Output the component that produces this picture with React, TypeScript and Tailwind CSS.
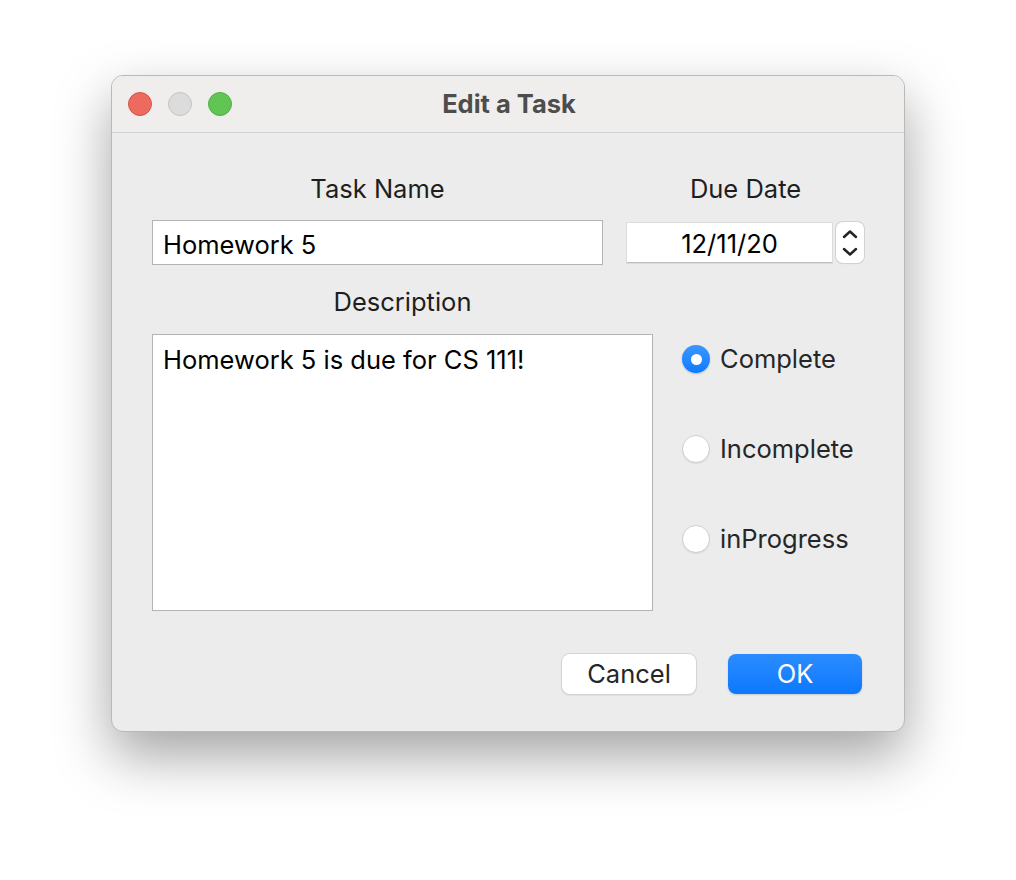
import React from "react";

function Radio({ checked, label }: { checked?: boolean; label: string }) {
  return (
    <div className="flex items-center h-[28px]">
      {checked ? (
        <div className="w-[28px] h-[28px] rounded-full bg-gradient-to-b from-[#3a96ff] to-[#0a7bff] flex items-center justify-center shadow-[0_1px_2px_rgba(0,0,0,0.2)]">
          <div className="w-[11px] h-[11px] rounded-full bg-white" />
        </div>
      ) : (
        <div className="w-[28px] h-[28px] rounded-full bg-white border border-[#cfcfcf] shadow-[0_1px_1px_rgba(0,0,0,0.08)]" />
      )}
      <span className="ml-[10px] text-[25.5px] text-[#262626] leading-none">{label}</span>
    </div>
  );
}

export default function App() {
  return (
    <div
      className="w-[1016px] h-[880px] bg-white pl-[111px] pt-[75px]"
      style={{ fontFamily: "Inter, 'Noto Sans', sans-serif" }}
    >
      <div className="w-[794px] h-[657px] rounded-[12px] bg-[#ececec] border border-[#b9b9b9] shadow-[0_24px_55px_rgba(0,0,0,0.36)] overflow-hidden flex flex-col">
        {/* title bar */}
        <div className="h-[57px] bg-[#efeeed] border-b border-[#d2d2d2] flex items-center relative shrink-0">
          <div className="flex items-center gap-[16px] pl-[16px]">
            <div className="w-[24px] h-[24px] rounded-full bg-[#ec6a5e] border border-[#d2544a]" />
            <div className="w-[24px] h-[24px] rounded-full bg-[#dcdcdc] border border-[#c4c4c4]" />
            <div className="w-[24px] h-[24px] rounded-full bg-[#61c554] border border-[#4fae43]" />
          </div>
          <div className="absolute inset-0 flex items-center justify-center pointer-events-none">
            <span className="text-[25.5px] font-bold text-[#4d4d4d] pl-[2px]">Edit a Task</span>
          </div>
        </div>

        {/* body */}
        <div className="pl-[40px] pt-[41px] flex flex-col">
          <div className="flex">
            <div className="w-[451px] flex flex-col">
              <div className="h-[30px] flex items-center justify-center text-[25.5px] text-[#1e1e1e]">Task Name</div>
              <div className="mt-[16px] h-[45px] bg-white border border-[#b3b3b3] flex items-center pl-[10px] pt-[5px] text-[25.5px] text-black">
                Homework 5
              </div>
            </div>
            <div className="ml-[24px] w-[237px] flex flex-col">
              <div className="h-[30px] flex items-center justify-center text-[25.5px] text-[#1e1e1e]">Due Date</div>
              <div className="mt-[18px] flex items-start">
                <div className="mt-[1px] w-[205px] h-[40px] bg-white border-b border-[#bdbdbd] shadow-[0_0_0_1px_#dcdcdc] flex items-center justify-center pt-[3px] text-[25.5px] text-black">
                  12/11/20
                </div>
                <div className="ml-[4px] w-[28px] h-[41px] bg-white rounded-[7px] shadow-[0_0_0_1px_#d2d2d2,0_1px_1px_rgba(0,0,0,0.15)] flex flex-col items-center justify-center">
                  <svg width="16" height="10" viewBox="0 0 16 10" className="mb-[8px]">
                    <path d="M2 8 L8 2.5 L14 8" fill="none" stroke="#222" strokeWidth="2.4" strokeLinecap="round" strokeLinejoin="round" />
                  </svg>
                  <svg width="16" height="10" viewBox="0 0 16 10">
                    <path d="M2 2 L8 7.5 L14 2" fill="none" stroke="#222" strokeWidth="2.4" strokeLinecap="round" strokeLinejoin="round" />
                  </svg>
                </div>
              </div>
            </div>
          </div>

          <div className="flex mt-[22px]">
            <div className="w-[501px] flex flex-col">
              <div className="h-[30px] flex items-center justify-center text-[25.5px] text-[#1e1e1e]">Description</div>
              <div className="mt-[17px] h-[277px] bg-white border border-[#b3b3b3] pl-[10px] pt-[10px] text-[25.5px] text-black leading-[30px]">
                Homework 5 is due for CS 111!
              </div>
            </div>
            <div className="ml-[29px] pt-[58px] flex flex-col gap-[62px]">
              <Radio checked label="Complete" />
              <Radio label="Incomplete" />
              <Radio label="inProgress" />
            </div>
          </div>

          <div className="flex justify-end pr-[42px] mt-[43px] gap-[32px]">
            <div className="w-[134px] h-[40px] rounded-[8px] bg-white shadow-[0_0_0_1px_#d4d4d4,0_1px_2px_rgba(0,0,0,0.2)] flex items-center justify-center text-[25.5px] text-[#262626]">
              Cancel
            </div>
            <div className="w-[134px] h-[40px] rounded-[8px] bg-gradient-to-b from-[#2a8cff] to-[#0a78fe] shadow-[0_1px_2px_rgba(0,0,0,0.15)] flex items-center justify-center text-[25.5px] text-white">
              OK
            </div>
          </div>
        </div>
      </div>
    </div>
  );
}
